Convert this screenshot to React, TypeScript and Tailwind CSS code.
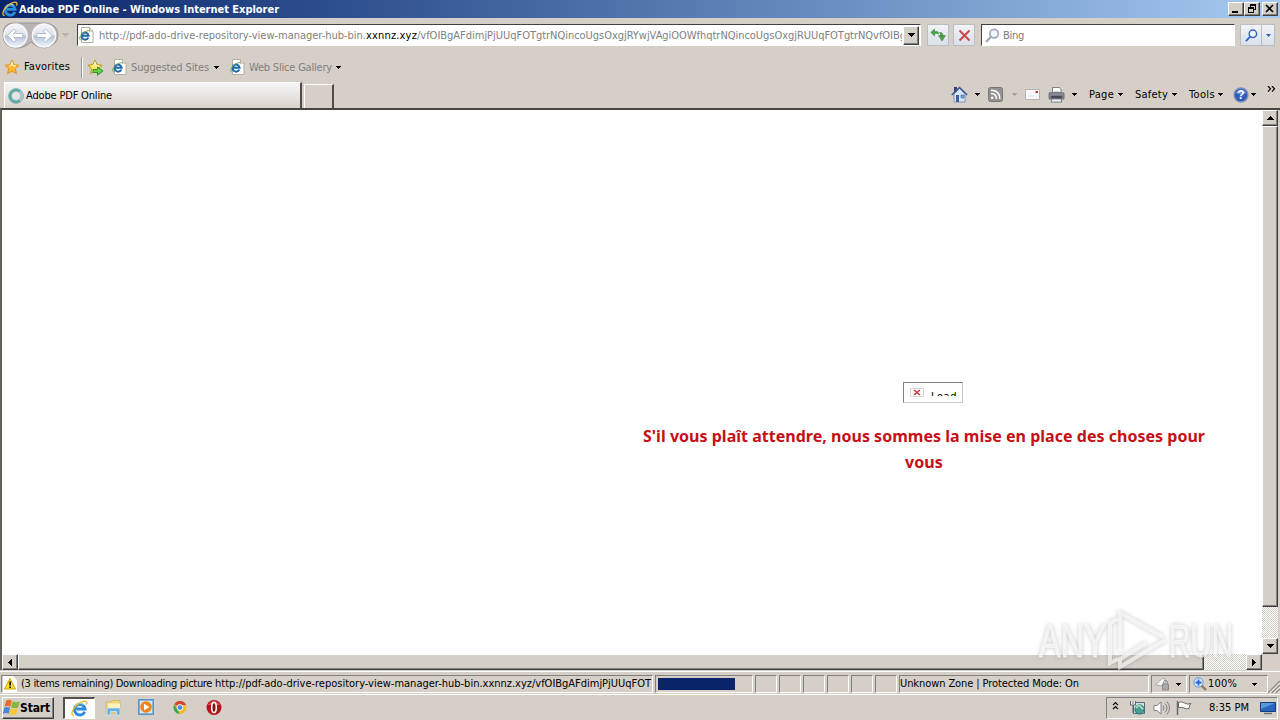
import { useLayoutEffect, useRef, useState } from "react";
import type { ReactNode } from "react";
import clsx from "clsx";

interface LabelProps {
  width: number;
  children: string;
  className?: string;
}

// Fixed-width UI text: the tracking is adjusted so the string fills its width
function Label({ width, children, className }: LabelProps) {
  const ref = useRef<HTMLSpanElement>(null);
  const [spacing, setSpacing] = useState(0);

  useLayoutEffect(() => {
    if (ref.current) {
      const natural = ref.current.getBoundingClientRect().width;
      setSpacing((width - natural) / children.length);
    }
  }, [width, children]);

  return (
    <span ref={ref} className={clsx("inline-block shrink-0 whitespace-pre", className)} style={{ letterSpacing: spacing }}>
      {children}
    </span>
  );
}

const raised =
  "border border-t-white border-l-white border-r-[#404040] border-b-[#404040] bg-[#d4d0c8] shadow-[inset_-1px_-1px_0_#808080] flex items-center justify-center shrink-0";
const sunken = "border border-t-[#808080] border-l-[#808080] border-r-white border-b-white shrink-0";
const checker = "bg-[repeating-conic-gradient(#fff_0_25%,#d4d0c8_0_50%)] bg-[length:2px_2px]";

function Arrow({ className, dir = "down" }: { className?: string; dir?: "up" | "down" | "left" | "right" }) {
  const paths = {
    down: "M0 0h7L3.5 4z",
    up: "M0 4h7L3.5 0z",
    left: "M4 0v7L0 3.5z",
    right: "M0 0v7L4 3.5z",
  };
  const flat = dir === "up" || dir === "down";
  return (
    <svg width={flat ? 7 : 4} height={flat ? 4 : 7} className={clsx("shrink-0", className)} fill="currentColor" shapeRendering="crispEdges">
      <path d={paths[dir]} />
    </svg>
  );
}

function IeMark({ size, className }: { size: number; className?: string }) {
  return (
    <svg width={size} height={size} viewBox="0 0 16 16" className={clsx("shrink-0", className)} fill="none">
      <path d="M12.900 11a5 5 0 1 1 .3-2.600H5" stroke="#2b8bdc" strokeWidth="2.800" />
      <path d="M12 4.600A5 5 0 0 0 4 6" stroke="#8ad6f8" strokeWidth="1.200" />
      <path d="M2.600 14.600C-.6 14 1 9 5 5.200 8.800 1.700 13.600.2 14.700 1.900c.5.8.1 1.900-.3 2.600" stroke="#eebc2c" strokeWidth="1.300" />
    </svg>
  );
}

function PageIcon({ className }: { className?: string }) {
  return (
    <svg width="15" height="16" viewBox="0 0 15 16" className={clsx("shrink-0", className)} fill="none">
      <path d="M2.500.5h8l3.500 3.500v11.500H2.500z" fill="#fff" stroke="#b5ae9f" />
      <path d="M10.500.5V4H14" fill="#e6e2da" stroke="#b5ae9f" />
      <path d="M9.300 10.600a3.500 3.500 0 1 1 .3-1.900H3.500" stroke="#1d69ae" strokeWidth="2" />
      <path d="M1.800 13C-.4 12.300.7 9 4 6.200c2.700-2.300 6-3.200 6.500-1.800" stroke="#6aa54a" />
    </svg>
  );
}

function Star({ add, className }: { add?: boolean; className?: string }) {
  return (
    <svg width="17" height="17" viewBox="0 0 17 17" className={clsx("shrink-0", className)}>
      <path d="M8 1l2.100 4.700 5 .5-3.700 3.400 1 5L8 12.100l-4.400 2.500 1-5L.9 6.200l5-.5z" fill={add ? "#ffe45c" : "#fdb92b"} stroke={add ? "#b19a1a" : "#e0922c"} />
      <path d="M5 7l2-.3 1-3 1 3 3 .2" fill="none" stroke="#fff3b0" strokeWidth="1.200" />
      {add && <path d="M6 10.500h4.500V8l5.500 4-5.500 4.200v-2.700H6z" fill="#63d244" stroke="#238a26" strokeWidth=".9" />}
    </svg>
  );
}

function TitleBar() {
  const button = clsx(raised, "h-[14px] w-4");
  return (
    <div className="flex h-[18px] items-center bg-linear-to-r from-[#0a246a] to-[#a6caf0] text-white">
      <IeMark size={16} className="ml-[2px]" />
      <Label width={260} className="mt-px ml-px font-bold">Adobe PDF Online - Windows Internet Explorer</Label>
      <div className="mr-[2px] ml-auto flex text-black">
        <div className={button}>
          <svg width="10" height="10" shapeRendering="crispEdges"><path d="M1 7h6v2H1z" /></svg>
        </div>
        <div className={button}>
          <svg width="10" height="10" shapeRendering="crispEdges">
            <path d="M3 0h6v6H7V5h1V2H4v1H3z" />
            <path d="M1 3h6v6H1zM2 5v3h4V5z" fillRule="evenodd" />
          </svg>
        </div>
        <div className={clsx(button, "ml-[2px]")}>
          <svg width="10" height="10" stroke="#000" strokeWidth="1.600"><path d="M1 1l7 7M8 1L1 8" /></svg>
        </div>
      </div>
    </div>
  );
}

function BackForward() {
  return (
    <svg width="57" height="28" viewBox="0 0 57 28" className="mt-[2px] ml-[2px] shrink-0">
      <defs>
        <linearGradient id="orb" x1="0" y1="0" x2="0" y2="1">
          <stop offset="0" stopColor="#f4f6fa" />
          <stop offset=".48" stopColor="#dde2ea" />
          <stop offset=".52" stopColor="#b4c2d6" />
          <stop offset="1" stopColor="#eef6ff" />
        </linearGradient>
      </defs>
      <path d="M12 1h32q12 2 12 12T43 26q-8 0-14-6-6 6-15 6Q1 25 1 13T12 1z" fill="#b9b5b6" stroke="#9a9496" />
      <circle cx="13.500" cy="13.500" r="11.500" fill="url(#orb)" stroke="#f8f8fb" strokeWidth="1.500" />
      <circle cx="42" cy="13.500" r="11.500" fill="url(#orb)" stroke="#f8f8fb" strokeWidth="1.500" />
      <g fill="#fff" stroke="#a3b1c8" strokeWidth=".8">
        <path d="M5.500 13.500l6.500-6.500 2.300 2-2.600 2.500h9v4h-9l2.600 2.500-2.300 2z" />
        <path d="M50 13.500l-6.500-6.500-2.300 2 2.600 2.500h-9v4h9l-2.600 2.500 2.300 2z" />
      </g>
    </svg>
  );
}

function Magnifier({ color, size = 14 }: { color: string; size?: number }) {
  return (
    <svg width={size} height={size} viewBox="0 0 14 14" className="shrink-0" fill="none" stroke={color}>
      <circle cx="8.500" cy="5.200" r="4" strokeWidth="1.600" fill="#eff6ff" />
      <path d="M5.500 8.200L1 13" strokeWidth="2" />
    </svg>
  );
}

function NavBar() {
  const field = "h-[22px] border border-t-[#404040] border-l-[#404040] border-r-white border-b-white bg-white flex items-center shrink-0";
  const tool = "flex h-[22px] items-center justify-center rounded-[1px] border border-[#b9bcc0] bg-linear-to-b from-[#f1f3f6] to-[#d9e0e9] shrink-0";
  return (
    <div className="flex h-[34px] items-center">
      <BackForward />
      <Arrow className="ml-[3px] text-[#b8b3ac]" />
      <div className={clsx(field, "ml-[8px] w-[844px] text-[#808080]")}>
        <PageIcon className="ml-px" />
        <div className="mt-[2px] ml-[5px] flex w-[803px] overflow-hidden">
          <Label width={267}>http://pdf-ado-drive-repository-view-manager-hub-bin.</Label>
          <Label width={51} className="text-black">xxnnz.xyz</Label>
          <Label width={119}>/vfOIBgAFdimjPjUUqFOT</Label>
          <Label width={370}>gtrNQincoUgsOxgjRYwjVAgiOOWfhqtrNQincoUgsOxgjRUUqFOTgtrNQvfOIBg</Label>
        </div>
        <div className={clsx(raised, "ml-px h-[19px] w-4 text-black")}>
          <Arrow />
        </div>
      </div>
      <div className={clsx(tool, "ml-[6px] w-[22px]")}>
        <svg width="16" height="15" viewBox="0 0 16 15" fill="#4aa548" stroke="#2c7a32" strokeWidth=".5">
          <path d="M4.500 1v2.500H7q1.500 0 1.500 2.500Q8 5.500 7 5.500H4.500V8L.8 4.500z" />
          <path d="M8.500 7.500h7L12 13z" />
          <path d="M9.500 4.500q3.500-.5 3.500 3.500h-2.200q0-2-1.300-3.500z" />
        </svg>
      </div>
      <div className={clsx(tool, "ml-[4px] w-[22px]")}>
        <svg width="13" height="13" stroke="#c9474b" strokeWidth="2"><path d="M1.500 1.500l10 10M11.500 1.500l-10 10" /></svg>
      </div>
      <div className={clsx(field, "ml-[6px] w-[254px] text-[#7a7a7a]")}>
        <span className="ml-[3px]"><Magnifier color="#9fa9b6" size={15} /></span>
        <Label width={21} className="mt-[2px] ml-[3px]">Bing</Label>
      </div>
      <div className={clsx(tool, "ml-[5px] w-[22px]")}>
        <Magnifier color="#3365c8" size={13} />
      </div>
      <div className={clsx(tool, "-ml-px w-[14px]")}>
        <svg width="5" height="3" fill="#2d5fb8"><path d="M0 0h5L2.500 3z" /></svg>
      </div>
    </div>
  );
}

function SmallArrow({ className }: { className?: string }) {
  return (
    <svg width="5" height="3" className={clsx("shrink-0", className)} fill="currentColor" shapeRendering="crispEdges">
      <path d="M0 0h5L2.500 3z" />
    </svg>
  );
}

function FavoritesBar() {
  return (
    <div className="flex h-[30px] items-center">
      <Star className="ml-[4px]" />
      <Label width={46} className="ml-[3px]">Favorites</Label>
      <div className="ml-[11px] h-[21px] w-[2px] border-l border-[#9c978f] bg-white" />
      <Star add className="ml-[4px]" />
      <PageIcon className="ml-[8px]" />
      <Label width={78} className="mt-px ml-[4px] text-[#808080]">Suggested Sites</Label>
      <SmallArrow className="ml-[5px]" />
      <PageIcon className="ml-[11px]" />
      <Label width={83} className="mt-px ml-[4px] text-[#808080]">Web Slice Gallery</Label>
      <SmallArrow className="ml-[4px]" />
    </div>
  );
}

function CommandBar() {
  return (
    <div className="ml-auto flex h-[27px] items-center">
      <svg width="17" height="17" viewBox="0 0 17 17" className="shrink-0">
        <path d="M3 1h3v5H3z" fill="#33447f" />
        <path d="M3 8l5.500-5.500L14 8v8H3z" fill="#d9e6f8" stroke="#7188b3" strokeWidth=".8" />
        <path d="M.8 9L8.500 1.500 16.200 9" fill="none" stroke="#3b5694" strokeWidth="1.500" />
        <path d="M5 9h3v7H5z" fill="#3c5f9e" />
        <path d="M10 9h3v3h-3z" fill="#76b5e8" stroke="#3b5694" strokeWidth=".6" />
      </svg>
      <SmallArrow className="ml-[7px]" />
      <svg width="15" height="15" viewBox="0 0 15 15" className="ml-[8px] shrink-0" fill="none">
        <rect x=".5" y=".5" width="14" height="14" rx="2" fill="#929292" stroke="#777" />
        <path d="M3 6.500q5.500 0 5.500 5.500M3 3.200q8.800 0 8.800 8.800" stroke="#fff" strokeWidth="1.500" />
        <circle cx="4.200" cy="10.800" r="1.300" fill="#fff" />
      </svg>
      <SmallArrow className="ml-[9px] text-[#a5a09a]" />
      <svg width="15" height="11" viewBox="0 0 15 11" className="ml-[8px] shrink-0">
        <path d="M.5.5h14v10H.5z" fill="#f8f8fa" stroke="#b5b2b2" />
        <path d="M10.500 2h2.500v2h-2.500z" fill="#c4323e" />
        <path d="M3 7h6" stroke="#ddd" />
      </svg>
      <svg width="17" height="16" viewBox="0 0 17 16" className="ml-[8px] shrink-0" stroke="#62666f" strokeWidth=".8">
        <path d="M4.500.5h7l1.500 2V7H4.500z" fill="#fff" />
        <path d="M1 6q7-2 15 0v6H1z" fill="#858a94" />
        <path d="M3 9h11v2H3z" fill="#343943" />
        <path d="M4 12h9l1 3H3z" fill="#eef6ff" />
      </svg>
      <SmallArrow className="ml-[7px]" />
      <Label width={25} className="ml-[12px]">Page</Label>
      <SmallArrow className="ml-[4px]" />
      <Label width={33} className="ml-[12px]">Safety</Label>
      <SmallArrow className="ml-[4px]" />
      <Label width={26} className="ml-[12px]">Tools</Label>
      <SmallArrow className="ml-[3px]" />
      <svg width="16" height="16" viewBox="0 0 16 16" className="ml-[10px] shrink-0">
        <circle cx="8" cy="8" r="7" fill="#305bbe" stroke="#8192bb" strokeWidth="1.400" />
        <path d="M2.500 6Q8-.5 13.500 6 8 8 2.500 6z" fill="#789be0" />
        <text x="8" y="12.200" textAnchor="middle" fill="#fff" className="font-['Liberation_Sans'] text-[12px] font-bold">?</text>
      </svg>
      <SmallArrow className="ml-[2px]" />
      <svg width="9" height="6" className="mr-[4px] mb-[12px] ml-[11px] shrink-0" fill="none" stroke="#000" strokeWidth="1.200">
        <path d="M1 0l2.500 2.800L1 5.600M5 0l2.500 2.800L5 5.600" />
      </svg>
    </div>
  );
}

function TabRow() {
  return (
    <div className="flex h-[26px] items-end">
      <div className="ml-[4px] flex h-[26px] w-[298px] items-center border-t border-r-2 border-l border-t-white border-r-[#504b48] border-l-white bg-linear-to-b from-[#f7f6f5] to-[#d8d3cd]">
        <svg width="16" height="16" viewBox="0 0 16 16" className="ml-[3px]" fill="none" strokeWidth="2.600">
          <circle cx="8" cy="8" r="6" stroke="#a9ced3" />
          <path d="M12 3.500A6 6 0 1 0 12 12.500" stroke="#52b3ae" />
          <circle cx="8" cy="8" r="7.400" stroke="#7f979c" strokeWidth=".7" />
          <circle cx="8" cy="8" r="4.600" stroke="#7f979c" strokeWidth=".5" />
        </svg>
        <Label width={86} className="mt-px ml-[2px]">Adobe PDF Online</Label>
      </div>
      <div className="ml-[2px] h-[24px] w-[30px] border-t border-r-2 border-l border-t-white border-r-[#504b48] border-l-white" />
      <CommandBar />
    </div>
  );
}

function Watermark() {
  return (
    <svg width="204" height="70" viewBox="0 0 204 70" className="pointer-events-none absolute top-[605px] left-[1032px] drop-shadow-[0_0_2px_rgba(90,90,90,0.5)]">
      <g fill="#fff" fillOpacity=".65" stroke="#fff" strokeOpacity=".5" className="font-['Liberation_Sans'] text-[46px]">
        <text x="7" y="52" textLength="67" lengthAdjust="spacingAndGlyphs">ANY</text>
        <text x="137" y="52" textLength="64" lengthAdjust="spacingAndGlyphs">RUN</text>
      </g>
      <g fill="none" stroke="#fff" strokeOpacity=".65" strokeWidth="4">
        <path d="M86 14l-8 4v40l8-4" />
        <path d="M88 46V8l43 24" />
        <path d="M133 35L88 62v-8l26-16" />
      </g>
    </svg>
  );
}

function Content() {
  return (
    <div className="flex h-[562px] flex-col border-t-2 border-l-2 border-t-[#484541] border-l-[#65615d]">
      <div className="flex h-[544px]">
        <div className="w-[1260px] bg-white">
          <div className="mt-[272px] ml-[622px] flex w-[600px] flex-col items-center">
            <div className="ml-[18px] flex h-[21px] w-[60px] border border-t-[#808080] border-r-[#c8c8c8] border-b-[#c8c8c8] border-l-[#808080]">
              <svg width="14" height="9" viewBox="0 0 14 9" className="mt-[5px] ml-[6px] shrink-0">
                <path d="M.5.5h13v8H.5z" fill="#fff" stroke="#d6d6d6" />
                <path d="M4 2l6 5M10 2L4 7" stroke="#d22c31" strokeWidth="1.500" />
              </svg>
              <div className="mt-[4px] ml-[7px] h-[9px] w-[26px] overflow-hidden leading-[19px]">
                <Label width={26}>Load</Label>
              </div>
            </div>
            <div className="mt-[20px] flex flex-col items-center font-['Noto_Sans',sans-serif] text-[16px] leading-[26px] font-bold text-[#c61016]">
              <Label width={562}>S'il vous plaît attendre, nous sommes la mise en place des choses pour</Label>
              <Label width={38}>vous</Label>
            </div>
          </div>
        </div>
        <div className={clsx("flex w-4 flex-col", checker)}>
          <div className={clsx(raised, "h-4")}><Arrow dir="up" /></div>
          <div className={clsx(raised, "h-[481px]")} />
          <div className={clsx(raised, "mt-auto h-4")}><Arrow /></div>
        </div>
      </div>
      <div className="flex h-4">
        <div className={clsx("flex w-[1260px]", checker)}>
          <div className={clsx(raised, "w-4")}><Arrow dir="left" /></div>
          <div className={clsx(raised, "w-[1186px]")} />
          <div className={clsx(raised, "ml-auto w-4")}><Arrow dir="right" /></div>
        </div>
      </div>
    </div>
  );
}

function StatusBar() {
  return (
    <div className="flex h-[23px] items-start border-t border-white pt-[3px]">
      <div className={clsx(sunken, "ml-px flex h-[18px] w-[652px] items-center overflow-hidden")}>
        <svg width="16" height="16" viewBox="0 0 16 16" className="shrink-0">
          <path d="M1 0h10l4 4v12H1z" fill="#fff" />
          <path d="M8 2.500l5.500 10.500h-11z" fill="#ffdf22" stroke="#cda400" />
          <path d="M7.300 5.500h1.600v4H7.300zM7.300 10.500h1.600V12H7.300z" />
        </svg>
        <Label width={194} className="ml-[3px]">(3 items remaining) Downloading picture </Label>
        <Label width={317}>http://pdf-ado-drive-repository-view-manager-hub-bin.xxnnz.xyz</Label>
        <Label width={119}>/vfOIBgAFdimjPjUUqFOT</Label>
      </div>
      <div className={clsx(sunken, "ml-[2px] flex h-[18px] w-[98px] items-center")}>
        <div className="mb-px ml-[2px] h-[12px] w-[77px] bg-[#0a246a]" />
      </div>
      <div className="ml-[2px] flex gap-[2px]">
        {[0, 1, 2, 3, 4, 5].map((pane) => (
          <div key={pane} className={clsx(sunken, "h-[18px] w-[22px]")} />
        ))}
      </div>
      <div className={clsx(sunken, "ml-[2px] flex h-[18px] w-[250px] items-center")}>
        <Label width={179}>Unknown Zone | Protected Mode: On</Label>
      </div>
      <div className={clsx(sunken, "ml-[2px] flex h-[18px] w-[36px] items-center")}>
        <svg width="18" height="14" viewBox="0 0 18 14" className="ml-[2px]" fill="none" stroke="#898989">
          <path d="M1 7.500C5 6 6 2 10 1l2 4-5 4z" fill="#f5f5f5" stroke="#aaa" />
          <path d="M8.500 7h6v6h-6z" fill="#aaa" />
          <path d="M9.500 7V5.500a2 2 0 0 1 4 0V7" />
        </svg>
        <SmallArrow className="ml-[4px]" />
      </div>
      <div className={clsx(sunken, "ml-[2px] flex h-[18px] w-[79px] items-center border-r-transparent")}>
        <svg width="14" height="14" viewBox="0 0 14 14" className="ml-[3px] shrink-0">
          <path d="M8 8l5 5" stroke="#9b7650" strokeWidth="2.400" />
          <circle cx="5.500" cy="5.500" r="4.600" fill="#dcebff" stroke="#5c91dc" />
          <path d="M5.500 2.500v6M2.500 5.500h6" stroke="#2266cf" strokeWidth="1.800" />
        </svg>
        <Label width={29} className="ml-px">100%</Label>
        <SmallArrow className="ml-[15px]" />
      </div>
      <svg width="12" height="12" className="mt-[6px] shrink-0" stroke="#8d8982" strokeWidth="1.500">
        <path d="M0 12L12 0M4 12l8-8M8 12l4-4" />
        <path d="M1.500 12L12 1.500M5.500 12L12 5.500M9.500 12L12 9.500" stroke="#fff" strokeWidth=".8" />
      </svg>
    </div>
  );
}

function StartButton() {
  return (
    <div className={clsx(raised, "ml-[2px] h-[22px] w-[52px] !justify-start font-bold")}>
      <svg width="17" height="17" viewBox="0 0 16 16" className="shrink-0">
        <path d="M3 1.500q3-1.500 5.300.2L6.900 7.300q-2.300-1.400-5.400-.2z" fill="#ec6a2c" />
        <path d="M9 2.200q3 1.500 6.800.1L14.300 8q-3.500 1.200-6.700-.3z" fill="#85b83a" />
        <path d="M1.300 8q3-1.200 5.400.2L5.300 13.800q-2.300-1.300-5.400-.2z" fill="#4c87d6" />
        <path d="M7.300 8.600q3.300 1.400 6.700.2L12.600 14.400q-3.500 1.200-6.700-.2z" fill="#f7c72e" />
      </svg>
      <Label width={30} className="text-[12px]">Start</Label>
    </div>
  );
}

function TaskIcon({ children, className }: { children: ReactNode; className: string }) {
  return (
    <svg width="17" height="17" viewBox="0 0 17 17" className={clsx("shrink-0", className)}>
      {children}
    </svg>
  );
}

function Taskbar() {
  return (
    <div className="flex h-[26px] items-center border-t border-white">
      <StartButton />
      <div className="ml-[9px] flex h-[22px] w-[32px] items-center justify-center border border-t-2 border-l-2 border-t-[#55504c] border-r-white border-b-white border-l-[#55504c] bg-white">
        <IeMark size={17} />
      </div>
      <TaskIcon className="ml-[10px]">
        <path d="M1 3h5l1-1.500h8V14H1z" fill="#f1d77e" stroke="#d0b04f" strokeWidth=".7" />
        <path d="M3 4.500h12V9H3z" fill="#fff3bc" />
        <path d="M2 16V9h13v7h-3.500v-3.500h-6V16z" fill="#69afe0" stroke="#d1edff" strokeWidth=".7" />
      </TaskIcon>
      <TaskIcon className="ml-[16px]">
        <rect x=".5" y=".5" width="15" height="15" fill="#80b3dd" stroke="#5c93c2" />
        <path d="M2 2h12v12H2z" fill="#d4e8f7" />
        <circle cx="8" cy="8" r="5.800" fill="#f58516" />
        <path d="M6 4.700l5.500 3.300L6 11.300z" fill="#fff" />
      </TaskIcon>
      <TaskIcon className="ml-[17px]">
        <circle cx="8" cy="8.500" r="6.500" fill="#f2bf22" />
        <path d="M8 8.500L2.400 5.200A6.500 6.500 0 0 1 14 6H8z" fill="#d94335" />
        <path d="M2.400 5.200L6 11.500 7.500 15A6.500 6.500 0 0 1 2.400 5.200z" fill="#37a852" />
        <circle cx="8" cy="8.500" r="2.900" fill="#4a88e8" stroke="#fff" />
      </TaskIcon>
      <TaskIcon className="ml-[17px]">
        <circle cx="8" cy="8.500" r="7.500" fill="#b2161d" />
        <path d="M2 6Q8-2 14 6z" fill="#dd5354" />
        <ellipse cx="8" cy="8.500" rx="2.300" ry="5" fill="#871015" stroke="#fff" strokeWidth="1.600" />
      </TaskIcon>
      <div className={clsx(sunken, "mr-[2px] ml-auto flex h-[22px] w-[172px] items-center")}>
        <svg width="7" height="10" className="mb-[3px] ml-[5px]" fill="none" stroke="#000" strokeWidth="1.200">
          <path d="M1 4.200l2.500-2.500L6 4.200M1 8.200l2.500-2.500L6 8.200" />
        </svg>
        <svg width="17" height="16" viewBox="0 0 17 16" className="ml-[10px]" strokeWidth="1">
          <path d="M4.500 2.500h11v11h-11z" fill="#cfdfe3" stroke="#546c73" />
          <circle cx="10.500" cy="9.500" r="4.600" fill="#44a199" stroke="#276f73" />
          <path d="M7 8q3-4 5-1t2 1" stroke="#b4e4be" fill="none" strokeWidth="1.500" />
          <path d="M1.500 1v4h5V1M4 1v3M4 5.500V13" stroke="#57625f" fill="#fff" />
        </svg>
        <svg width="17" height="16" viewBox="0 0 17 16" className="ml-[7px]" fill="none" stroke="#828282">
          <path d="M1 5.500h3L8 2v12l-4-3.500H1z" fill="#fff" />
          <path d="M10 5.500q2 2.500 0 5M12 3.500q4 4.500 0 9M14 1.500q5 6.500 0 13" />
        </svg>
        <svg width="17" height="16" viewBox="0 0 17 16" className="ml-[6px]" fill="#fff" stroke="#686868">
          <path d="M2.500 2.500q3-1.500 6 .5t6.500.5q-2 2-2 5-3 1-5-.5t-5.500-.3z" />
          <path d="M1.500 1v14" strokeWidth="1.500" />
        </svg>
        <Label width={40} className="ml-[16px]">8:35 PM</Label>
        <svg width="16" height="14" viewBox="0 0 16 14" className="ml-[11px] shrink-0">
          <path d="M.5 1.500h15v9H.5z" fill="#2867bc" stroke="#153d7e" />
          <path d="M1 2h14L1 8z" fill="#5599df" />
          <path d="M4 12.500h8" stroke="#6b7480" strokeWidth="1.500" />
        </svg>
      </div>
    </div>
  );
}

export default function App() {
  return (
    <div className="relative h-[720px] w-[1280px] overflow-hidden bg-[#d5cfc8] font-['DejaVu_Sans_Condensed','DejaVu_Sans',sans-serif] text-[11px] leading-[14px] font-normal text-black">
      <TitleBar />
      <NavBar />
      <FavoritesBar />
      <TabRow />
      <Content />
      <div className="h-px" />
      <StatusBar />
      <Taskbar />
      <Watermark />
    </div>
  );
}
